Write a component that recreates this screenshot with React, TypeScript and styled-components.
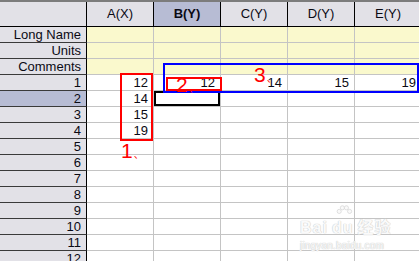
import React from 'react'
import styled, { createGlobalStyle } from 'styled-components'

const GlobalStyle = createGlobalStyle`
  html, body {
    margin: 0;
    padding: 0;
    background: #ffffff;
    overflow: hidden;
  }
  body {
    font-family: "Liberation Sans", Arial, sans-serif;
  }
`

const COLS = ['A(X)', 'B(Y)', 'C(Y)', 'D(Y)', 'E(Y)']
const META = ['Long Name', 'Units', 'Comments']
const DATA: Record<number, Array<string>> = {
  1: ['12', '12', '14', '15', '19'],
  2: ['14', '', '', '', ''],
  3: ['15', '', '', '', ''],
  4: ['19', '', '', '', ''],
}
const SEL_COL = 1
const SEL_ROW = 2

const Sheet = () => {
  const rows = Array.from({ length: 12 }, (_, i) => i + 1)

  return (
    <Wrap>
      <GlobalStyle />
      <TopBar />
      <Grid>
        <Corner />
        {COLS.map((c, i) => (
          <ColHead key={c} $selected={i === SEL_COL}>{c}</ColHead>
        ))}

        {META.map(m => (
          <React.Fragment key={m}>
            <RowHead>{m}</RowHead>
            {COLS.map(c => <MetaCell key={c} />)}
          </React.Fragment>
        ))}

        {rows.map(r => (
          <React.Fragment key={r}>
            <RowHead $selected={r === SEL_ROW}>{r}</RowHead>
            {COLS.map((c, i) => (
              <Cell key={c} $active={r === SEL_ROW && i === SEL_COL}>
                {DATA[r] ? DATA[r][i] : ''}
              </Cell>
            ))}
          </React.Fragment>
        ))}
      </Grid>

      {/* hand drawn annotations on top of the sheet */}
      <RedBox style={{ left: 120, top: 73, width: 33, height: 68 }} />
      <RedBox style={{ left: 166, top: 77, width: 56, height: 14 }} />
      <BlueBox />
      <Mark style={{ left: 121, top: 139 }}>1<Tick>、</Tick></Mark>
      <Mark style={{ left: 176, top: 73 }}>2<Tick>、</Tick></Mark>
      <Mark style={{ left: 254, top: 63 }}>3<Tick>、</Tick></Mark>

      <Watermark>
        <Paw viewBox="0 0 24 20">
          <circle cx="6" cy="8" r="2.6" />
          <circle cx="10" cy="3.5" r="2.6" />
          <circle cx="15" cy="3.5" r="2.6" />
          <circle cx="19" cy="8" r="2.6" />
        </Paw>
        <WmTitle>Bai<Du>du</Du>经验</WmTitle>
        <WmUrl>jingyan.baidu.com</WmUrl>
      </Watermark>
    </Wrap>
  )
}

const Wrap = styled.div`
  position: relative;
  width: 419px;
  height: 261px;
  overflow: hidden;
  background: #ffffff;
`

const TopBar = styled.div`
  height: 2px;
  background: #7c7c7c;
`

const Grid = styled.div`
  display: grid;
  grid-template-columns: 87px repeat(5, 67px);
  grid-template-rows: 25px;
  grid-auto-rows: 16px;
  font-size: 13px;
  color: #0a0a14;
`

const Corner = styled.div`
  background: #e2e1e7;
  border-right: 1px solid #000;
  border-bottom: 1px solid #000;
`

const ColHead = styled.div<{ $selected?: boolean }>`
  background: ${p => (p.$selected ? '#b7bcd4' : '#e2e1e7')};
  font-weight: ${p => (p.$selected ? 'bold' : 'normal')};
  border-right: 1px solid #000;
  border-bottom: 1px solid #000;
  display: flex;
  align-items: center;
  justify-content: center;
  padding-bottom: 1px;
`

const RowHead = styled.div<{ $selected?: boolean }>`
  background: ${p => (p.$selected ? '#b7bcd4' : '#e2e1e7')};
  border-right: 1px solid #000;
  border-bottom: 1px solid #3a3a3a;
  display: flex;
  align-items: center;
  justify-content: flex-end;
  padding-right: 5px;
  line-height: 15px;
`

const MetaCell = styled.div`
  background: #faf9cd;
  border-right: 1px solid #c4c4c4;
  border-bottom: 1px solid #c4c4c4;
`

const Cell = styled.div<{ $active?: boolean }>`
  background: #ffffff;
  border-right: 1px solid #c4c4c4;
  border-bottom: 1px solid #c4c4c4;
  display: flex;
  align-items: center;
  justify-content: flex-end;
  padding-right: 5px;
  line-height: 15px;
  box-shadow: ${p => (p.$active ? 'inset 0 0 0 2px #000' : 'none')};
`

const RedBox = styled.div`
  position: absolute;
  border: 2px solid #ff0000;
  box-sizing: border-box;
`

const BlueBox = styled.div`
  position: absolute;
  left: 163px;
  top: 63px;
  width: 256px;
  height: 30px;
  border: 2px solid #0000ff;
  box-sizing: border-box;
`

const Mark = styled.div`
  position: absolute;
  color: #ff0000;
  font-size: 21px;
  line-height: 24px;
  font-family: "Liberation Sans", Arial, "Noto Sans CJK SC", sans-serif;
`

const Tick = styled.span`
  font-size: 10px;
  margin-left: 1px;
`

const Watermark = styled.div`
  position: absolute;
  left: 300px;
  top: 205px;
  width: 92px;
  color: #fafafa;
  text-shadow: 0 0 1px #c8c8c8, 0 0 1px #c8c8c8;
`

const Paw = styled.svg`
  position: absolute;
  left: 34px;
  top: 0;
  width: 20px;
  height: 16px;
  fill: #fafafa;
  stroke: #d0d0d0;
  stroke-width: 0.8;
`

const WmTitle = styled.div`
  margin-top: 14px;
  font-size: 16px;
  font-weight: bold;
  line-height: 17px;
  letter-spacing: 1px;
  font-family: "Liberation Sans", Arial, "Noto Sans CJK SC", sans-serif;
`

const Du = styled.span`
  margin: 0 4px;
`

const WmUrl = styled.div`
  margin-top: 4px;
  font-size: 10px;
  letter-spacing: 0.2px;
`

export default Sheet
